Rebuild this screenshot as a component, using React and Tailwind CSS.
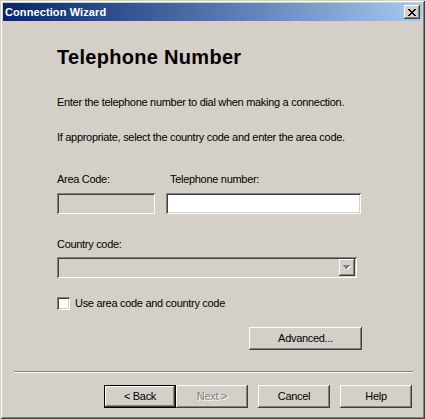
const raised =
  "shadow-[inset_-1px_-1px_#404040,inset_1px_1px_#ffffff,inset_-2px_-2px_#808080,inset_2px_2px_#d4d0c8]";
const sunken =
  "shadow-[inset_1px_1px_#808080,inset_-1px_-1px_#ffffff,inset_2px_2px_#404040,inset_-2px_-2px_#d4d0c8]";

function CloseX() {
  const rows = [
    [0, 2, 6, 2],
    [1, 2, 5, 2],
    [2, 4],
    [3, 2],
    [2, 4],
    [1, 2, 5, 2],
    [0, 2, 6, 2],
  ];
  const rects = [];
  rows.forEach((r, y) => {
    for (let i = 0; i < r.length; i += 2) {
      rects.push(<rect key={y + "-" + i} x={r[i]} y={y} width={r[i + 1]} height={1} />);
    }
  });
  return (
    <svg width="8" height="7" viewBox="0 0 8 7" shapeRendering="crispEdges" fill="#000">
      {rects}
    </svg>
  );
}

function Arrow() {
  return (
    <svg width="8" height="5" viewBox="0 0 8 5" shapeRendering="crispEdges">
      <g fill="#ffffff">
        <rect x="1" y="1" width="7" height="1" />
        <rect x="2" y="2" width="5" height="1" />
        <rect x="3" y="3" width="3" height="1" />
        <rect x="4" y="4" width="1" height="1" />
      </g>
      <g fill="#808080">
        <rect x="0" y="0" width="7" height="1" />
        <rect x="1" y="1" width="5" height="1" />
        <rect x="2" y="2" width="3" height="1" />
        <rect x="3" y="3" width="1" height="1" />
      </g>
    </svg>
  );
}

function Btn({ children, def, disabled, w = "w-[72px]" }) {
  return (
    <div
      className={`${w} h-[23px] flex items-center justify-center bg-[#d4d0c8] ${raised} ${
        def ? "outline outline-1 outline-black -outline-offset-1 shadow-[inset_-2px_-2px_#404040,inset_2px_2px_#ffffff,inset_-3px_-3px_#808080]" : ""
      } ${disabled ? "text-[#808080] [text-shadow:1px_1px_0_#ffffff]" : "text-black"}`}
    >
      {children}
    </div>
  );
}

export default function App() {
  return (
    <div className="w-[425px] h-[419px] bg-[#d4d0c8] p-[3px] flex flex-col shadow-[inset_1px_1px_#d4d0c8,inset_-1px_-1px_#404040,inset_2px_2px_#ffffff,inset_-2px_-2px_#808080] text-[11px] leading-[13px] tracking-[-0.3px] text-black font-['Liberation_Sans',Arial,sans-serif] select-none">
      {/* Title bar */}
      <div className="h-[18px] flex items-center justify-between pl-[2px] pr-[2px] bg-linear-to-r from-[#0a246a] to-[#a6caf0]">
        <span className="text-white font-bold text-[11px] leading-[13px] tracking-[0.1px]">Connection Wizard</span>
        <div className={`w-[16px] h-[14px] bg-[#d4d0c8] flex items-center justify-center ${raised}`}>
          <CloseX />
        </div>
      </div>

      {/* Content */}
      <div className="pl-[54px] flex flex-col">
        <div className="mt-[26px] text-[20px] leading-[20px] font-bold tracking-[0.3px]">Telephone Number</div>
        <div className="mt-[29px]">Enter the telephone number to dial when making a connection.</div>
        <div className="mt-[22px]">If appropriate, select the country code and enter the area code.</div>

        <div className="mt-[29px] flex">
          <div className="w-[109px]">Area Code:</div>
          <div className="pl-[4px]">Telephone number:</div>
        </div>
        <div className="mt-[7px] flex gap-[11px]">
          <div className={`w-[98px] h-[21px] bg-[#d4d0c8] ${sunken}`} />
          <div className={`w-[195px] h-[21px] bg-white ${sunken}`} />
        </div>

        <div className="mt-[24px]">Country code:</div>
        <div className={`mt-[6px] w-[300px] h-[21px] bg-[#d4d0c8] ${sunken} flex justify-end items-center pr-[2px]`}>
          <div className={`w-[16px] h-[17px] bg-[#d4d0c8] ${raised} flex items-center justify-center`}>
            <Arrow />
          </div>
        </div>

        <div className="mt-[19px] flex items-center h-[13px]">
          <div className={`w-[13px] h-[13px] bg-white ${sunken}`} />
          <span className="ml-[5px]">Use area code and country code</span>
        </div>

        <div className="mt-[17px] w-[305px] flex justify-end">
          <Btn w="w-[113px]">Advanced...</Btn>
        </div>
      </div>

      {/* Separator */}
      <div className="mt-[21px] ml-[11px] mr-[9px] h-[2px] border-t border-b border-t-[#808080] border-b-white" />

      {/* Buttons */}
      <div className="mt-[12px] pr-[10px] flex justify-end">
        <Btn def>&lt; Back</Btn>
        <Btn disabled>Next &gt;</Btn>
        <div className="w-[10px]" />
        <Btn>Cancel</Btn>
        <div className="w-[10px]" />
        <Btn>Help</Btn>
      </div>
    </div>
  );
}
